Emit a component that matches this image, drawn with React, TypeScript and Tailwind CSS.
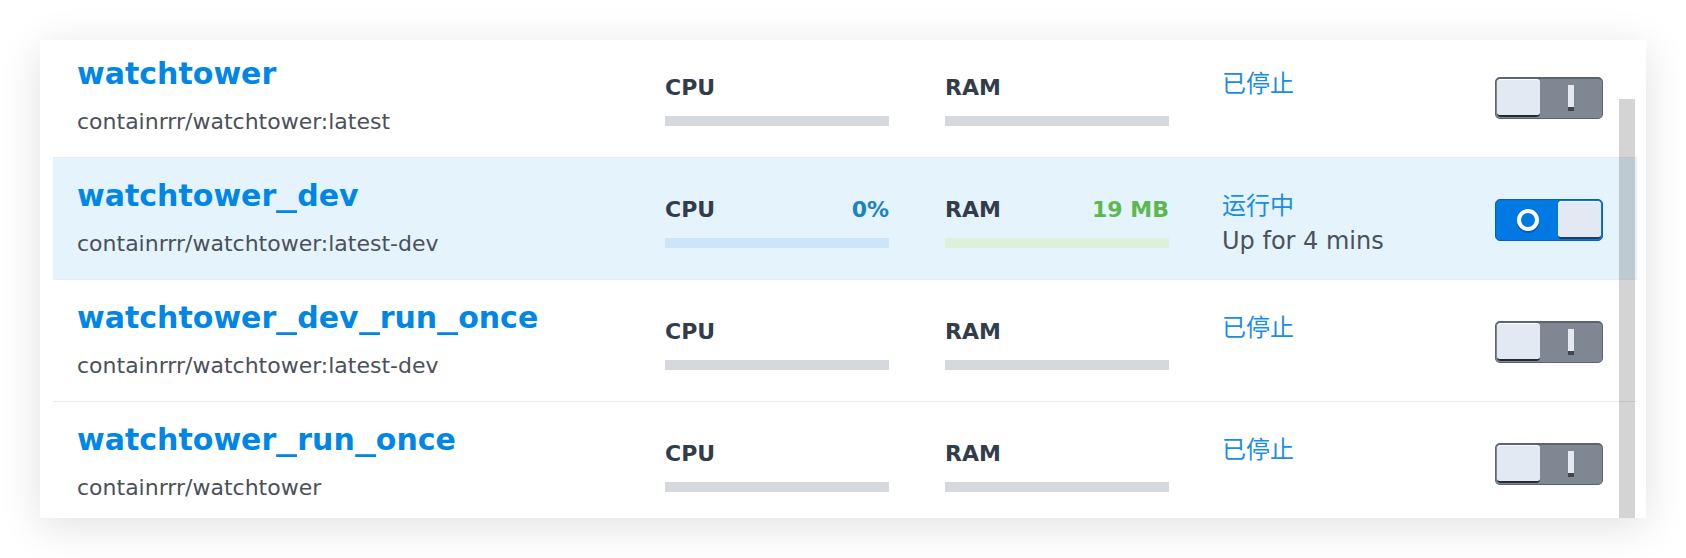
import React from 'react';

type Container = {
  name: string;
  image: string;
  running: boolean;
  cpu?: string;
  ram?: string;
  uptime?: string;
};

const containers: Container[] = [
  { name: 'watchtower', image: 'containrrr/watchtower:latest', running: false },
  {
    name: 'watchtower_dev',
    image: 'containrrr/watchtower:latest-dev',
    running: true,
    cpu: '0%',
    ram: '19 MB',
    uptime: 'Up for 4 mins',
  },
  { name: 'watchtower_dev_run_once', image: 'containrrr/watchtower:latest-dev', running: false },
  { name: 'watchtower_run_once', image: 'containrrr/watchtower', running: false },
];

function Toggle({ on }: { on: boolean }) {
  if (on) {
    return (
      <div className="flex h-[42px] w-[108px] rounded-[5px] border border-[#0660b8] bg-[#0079e2] p-px">
        <div className="flex flex-1 items-center justify-center">
          <div className="h-[22px] w-[22px] rounded-full border-[4px] border-white shadow-[0_2px_0_#0b55c4]" />
        </div>
        <div className="h-full w-[43px] rounded-[4px] border-b-2 border-[#2a3a52] bg-[#e2e9f2] shadow-[inset_0_1px_0_#ffffff]" />
      </div>
    );
  }
  return (
    <div className="flex h-[42px] w-[108px] rounded-[5px] border border-[#5b6470] border-t-2 bg-[#7f8892] pb-px pl-px">
      <div className="h-full w-[43px] rounded-[4px] border-b-2 border-[#262a31] bg-[#e2e9f2] shadow-[inset_0_1px_0_#ffffff]" />
      <div className="flex flex-1 items-center justify-center">
        <div className="flex h-[26px] w-[6px] flex-col">
          <div className="flex-1 bg-[#e6eaf0]" />
          <div className="h-[4px] bg-[#3d4652]" />
        </div>
      </div>
    </div>
  );
}

// Verdana-style wide underscores between name parts
function Name({ text }: { text: string }) {
  const parts = text.split('_');
  return (
    <>
      {parts.map((p, i) => (
        <React.Fragment key={i}>
          {i > 0 && <span className="inline-block w-[21px] origin-left scale-x-[1.4]">_</span>}
          {p}
        </React.Fragment>
      ))}
    </>
  );
}

function Meter({ label, value, fill, valueColor }: { label: string; value?: string; fill: string; valueColor: string }) {
  return (
    <div className="w-[224px] pt-[38px]">
      <div className="flex justify-between text-[22px] font-bold leading-[28px]">
        <span className="text-[#333d4a]">{label}</span>
        {value && <span className={valueColor}>{value}</span>}
      </div>
      <div className={`mt-[14px] h-[10px] ${fill}`} />
    </div>
  );
}

function Row({ c }: { c: Container }) {
  return (
    <div
      className={`flex h-[122px] border-b border-[#e6ecf1] pl-[24px] ${c.running ? 'bg-[#e5f3fd]' : 'bg-white'}`}
    >
      <div className="w-[588px] pt-[20px]">
        <div className="text-[30px] font-bold leading-[36px] text-[#0086e6]">
          <Name text={c.name} />
        </div>
        <div className="mt-[16px] text-[22px] leading-[28px] text-[#4b515a]">{c.image}</div>
      </div>
      <Meter
        label="CPU"
        value={c.cpu}
        valueColor="text-[#1a84c2]"
        fill={c.running ? 'bg-[#cce5f8]' : 'bg-[#d5d8dc]'}
      />
      <div className="w-[56px]" />
      <Meter
        label="RAM"
        value={c.ram}
        valueColor="text-[#5bb94f]"
        fill={c.running ? 'bg-[#ddf0db]' : 'bg-[#d5d8dc]'}
      />
      <div className="ml-[53px] w-[273px] pt-[33px]">
        <div className="text-[24px] leading-[30px] text-[#1a8de6]">{c.running ? '运行中' : '已停止'}</div>
        {c.uptime && <div className="mt-[5px] text-[24px] leading-[30px] text-[#4b515a]">{c.uptime}</div>}
      </div>
      <div className="pt-[41px]">
        <Toggle on={c.running} />
      </div>
    </div>
  );
}

export default function App() {
  return (
    <div className="h-[558px] w-[1686px] bg-white pl-[40px] pt-[40px] font-['DejaVu_Sans','Noto_Sans_CJK_SC',sans-serif]">
      <div className="relative h-[478px] w-[1606px] overflow-hidden bg-white pl-[13px] pr-[9px] shadow-[0_8px_40px_rgba(0,0,0,0.12)]">
        <div className="-mt-[4px]">
          {containers.map((c) => (
            <Row key={c.name} c={c} />
          ))}
        </div>
        {/* overlay scrollbar */}
        <div className="absolute bottom-0 right-[11px] top-[59px] w-[16px] bg-[rgba(0,0,0,0.17)]" />
      </div>
    </div>
  );
}
